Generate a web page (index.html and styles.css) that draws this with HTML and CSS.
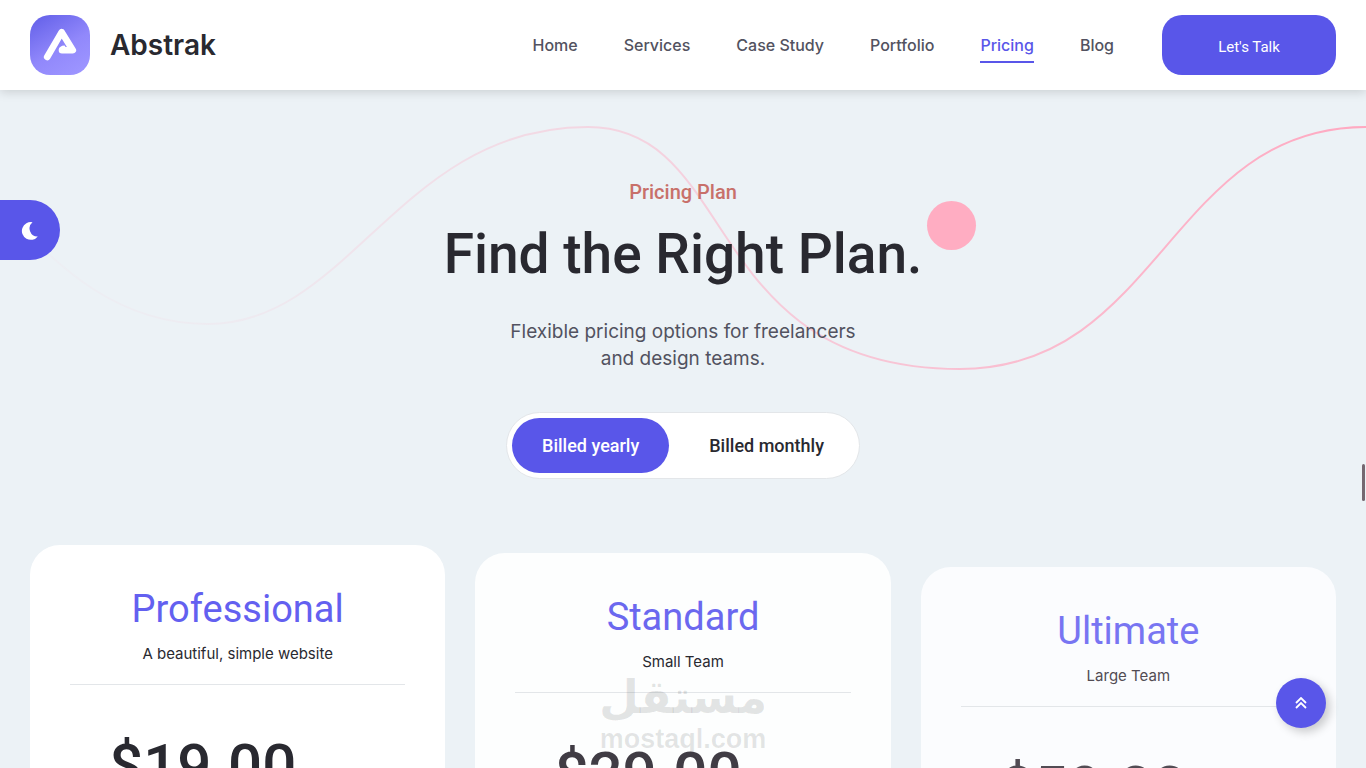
FILE: index.html
```html
<!DOCTYPE html>
<html lang="en">
<head>
  <meta charset="UTF-8">
  <meta name="viewport" content="width=device-width, initial-scale=1">
  <title>Abstrak</title>
  <link rel="stylesheet" href="styles.css">
</head>
<body>
  <header class="header">
    <a class="logo" href="#">
      <svg class="logo-icon" viewBox="0 0 60 60" aria-hidden="true">
        <defs>
          <linearGradient id="logoFill" x1="0.1" y1="0" x2="0.7" y2="1">
            <stop offset="0" stop-color="#6461e9"/>
            <stop offset="0.6" stop-color="#9188fb"/>
            <stop offset="1" stop-color="#9c94ff"/>
          </linearGradient>
        </defs>
        <rect width="60" height="60" rx="20" fill="url(#logoFill)"/>
        <path d="M17.200 42 L31.700 17.200 L42.800 35.200 H32" fill="none" stroke="#fff" stroke-width="6.600" stroke-linecap="round" stroke-linejoin="round"/>
        <path d="M28.800 35 Q29.500 30.500 34.500 30.500 L37 34 Z" fill="#fff"/>
      </svg>
      <span class="logo-text">Abstrak</span>
    </a>
    <div class="header-right">
      <nav class="menu">
        <a href="#">Home</a>
        <a href="#">Services</a>
        <a href="#">Case Study</a>
        <a href="#">Portfolio</a>
        <a href="#" class="active">Pricing</a>
        <a href="#">Blog</a>
      </nav>
      <button class="talk-btn" type="button">Let's Talk</button>
    </div>
  </header>

  <button class="theme-btn" type="button" aria-label="Dark mode">
    <svg viewBox="0 0 18 20" width="18" height="20" aria-hidden="true">
      <path d="M11.500 2.200 A8.900 8.900 0 1 0 16.800 16.400 A8 8 0 0 1 11.500 2.200 Z" fill="#fff"/>
    </svg>
  </button>

  <main class="pricing">
    <!-- background line and circle -->
    <svg class="line-shape" viewBox="0 0 1366 260" aria-hidden="true">
      <defs>
        <linearGradient id="lineFade" gradientUnits="userSpaceOnUse" x1="40" y1="0" x2="1366" y2="0">
          <stop offset="0" stop-color="#ffa9c1" stop-opacity="0.04"/>
          <stop offset="0.15" stop-color="#ffa9c1" stop-opacity="0.1"/>
          <stop offset="1" stop-color="#ffa9c1"/>
        </linearGradient>
      </defs>
      <path d="M0 87 C60 153 120 206 208 206 C350 206 400 9 588 9 C740 9 700 251 960 251 C1160 251 1170 9 1366 9" fill="none" stroke="url(#lineFade)" stroke-width="2"/>
    </svg>
    <span class="circle-shape"></span>

    <div class="section-heading">
      <p class="subtitle">Pricing Plan</p>
      <h1>Find the Right Plan.</h1>
      <p class="description">Flexible pricing options for freelancers<br>and design teams.</p>
    </div>

    <div class="billing">
      <button class="billing-btn active" type="button">Billed yearly</button>
      <button class="billing-btn" type="button">Billed monthly</button>
    </div>

    <div class="plans">
      <section class="plan">
        <h2>Professional</h2>
        <p class="plan-info">A beautiful, simple website</p>
        <p class="price">$19.00</p>
      </section>
      <section class="plan plan-second">
        <h2>Standard</h2>
        <p class="plan-info">Small Team</p>
        <div class="watermark">
          <span class="watermark-ar" lang="ar">مستقل</span>
          <span class="watermark-en">mostaql.com</span>
        </div>
        <p class="price">$29.00</p>
      </section>
      <section class="plan plan-third">
        <h2>Ultimate</h2>
        <p class="plan-info">Large Team</p>
        <p class="price">$59.00</p>
      </section>
    </div>
  </main>

  <span class="scroll-thumb"></span>
  <button class="top-btn" type="button" aria-label="Back to top">
    <svg viewBox="0 0 12 12" width="12" height="12" aria-hidden="true">
      <path d="M1 6 L6 1 L11 6 M1 11 L6 6 L11 11" fill="none" stroke="#fff" stroke-width="1.800"/>
    </svg>
  </button>
</body>
</html>
```
FILE: styles.css
```css
* {
  box-sizing: border-box;
}
body {
  margin: 0;
  height: 100vh;
  overflow: hidden;
  background-color: #ecf2f6;
  color: #292930;
  font-family: Roboto, sans-serif;
}
h1, h2, p {
  margin: 0;
}
button {
  border: 0;
  padding: 0;
  font-family: inherit;
  cursor: pointer;
}
a {
  color: inherit;
  text-decoration: none;
}

/* header */
.header {
  position: relative;
  z-index: 2;
  display: flex;
  justify-content: space-between;
  align-items: center;
  padding: 15px 30px;
  background-color: #fff;
  box-shadow: 0 2px 10px rgba(0, 0, 0, 0.15);
}
.logo {
  display: flex;
  align-items: center;
  gap: 20px;
}
.logo-icon {
  width: 60px;
  height: 60px;
}
.logo-text {
  font-family: Inter, sans-serif;
  font-size: 28px;
  font-weight: 600;
}
.header-right {
  display: flex;
  align-items: center;
  gap: 48px;
}
.menu {
  display: flex;
  gap: 46px;
}
.menu a {
  padding: 7px 0 5px;
  border-bottom: 2px solid transparent;
  color: #525260;
  font-family: Inter, sans-serif;
  font-size: 16px;
  font-weight: 500;
  line-height: 22px;
}
.menu a.active {
  color: #5956e9;
  border-color: #5956e9;
}
.talk-btn {
  width: 174px;
  height: 60px;
  padding-top: 4px;
  border-radius: 20px;
  background-color: #5956e9;
  color: #fff;
  font-size: 15px;
}

/* floating buttons */
.theme-btn {
  position: fixed;
  z-index: 1;
  top: 200px;
  left: 0;
  width: 60px;
  height: 60px;
  border-radius: 0 30px 30px 0;
  background-color: #5956e9;
  display: flex;
  align-items: center;
  justify-content: center;
}
.top-btn {
  position: fixed;
  right: 40px;
  bottom: 40px;
  width: 50px;
  height: 50px;
  border-radius: 50%;
  background-color: #5956e9;
  box-shadow: 4px 4px 10px rgba(0, 0, 0, 0.2);
  display: flex;
  align-items: center;
  justify-content: center;
}
.scroll-thumb {
  position: fixed;
  top: 464px;
  right: 1px;
  width: 3px;
  height: 37px;
  border-radius: 2px;
  background-color: #756871;
}

/* pricing */
.pricing {
  position: relative;
  padding: 88px 30px 0;
}
.line-shape {
  position: absolute;
  top: 28px;
  left: 0;
  width: 100%;
}
.circle-shape {
  position: absolute;
  top: 111px;
  left: calc(50% + 244px);
  width: 49px;
  height: 49px;
  border-radius: 50%;
  background-color: #ffadc2;
}
.section-heading {
  position: relative;
  text-align: center;
}
.subtitle {
  color: #c8706a;
  font-size: 20px;
  font-weight: 500;
  line-height: 28px;
}
h1 {
  margin-top: 12px;
  font-size: 55px;
  font-weight: 500;
  line-height: 72px;
}
.description {
  margin-top: 28px;
  color: #525260;
  font-family: Inter, sans-serif;
  font-size: 19px;
  line-height: 27px;
}
.billing {
  position: relative;
  display: flex;
  width: fit-content;
  margin: 40px auto 0;
  padding: 5px;
  border: 1px solid #e3e6e9;
  border-radius: 34px;
  background-color: #fff;
}
.billing-btn {
  height: 55px;
  padding: 0 30px;
  border-radius: 30px;
  background-color: transparent;
  color: #292930;
  font-size: 18px;
  font-weight: 500;
}
.billing-btn + .billing-btn {
  margin-left: 10px;
}
.billing-btn.active {
  background-color: #5956e9;
  color: #fff;
}
.plans {
  display: grid;
  grid-template-columns: repeat(3, 1fr);
  align-items: start;
  gap: 30px;
  margin-top: 66px;
}
.plan {
  position: relative;
  min-height: 400px;
  padding: 40px;
  border-radius: 30px;
  background-color: #fff;
  text-align: center;
}
.plan h2 {
  color: #6360f0;
  font-size: 38px;
  font-weight: 400;
  line-height: 48px;
}
.plan-info {
  padding: 10px 0 20px;
  border-bottom: 1px solid #e3e6e9;
  font-family: Inter, sans-serif;
  font-size: 15px;
  line-height: 21px;
}
.price {
  position: relative;
  margin-top: 36px;
  padding-right: 70px;
  font-size: 60px;
  font-weight: 500;
  line-height: 90px;
}
.plan-second {
  margin-top: 8px;
  background-color: #fdfefe;
}
.plan-second h2 {
  color: #6b68ef;
}
.plan-second .price {
  color: #403c44;
}
.plan-third {
  margin-top: 22px;
  background-color: #fbfcfe;
}
.plan-third h2 {
  color: #7875f2;
}
.plan-third .plan-info,
.plan-third .price {
  color: #524c54;
}
.watermark {
  position: absolute;
  top: 116px;
  left: 0;
  width: 100%;
  display: flex;
  flex-direction: column;
  align-items: center;
  color: rgba(41, 48, 48, 0.12);
  font-weight: 700;
}
.watermark-ar {
  font-family: "DejaVu Sans", sans-serif;
  font-size: 46px;
  line-height: 56px;
}
.watermark-en {
  font-family: "Liberation Sans", Arial, sans-serif;
  font-size: 27px;
  line-height: 28px;
}
```
